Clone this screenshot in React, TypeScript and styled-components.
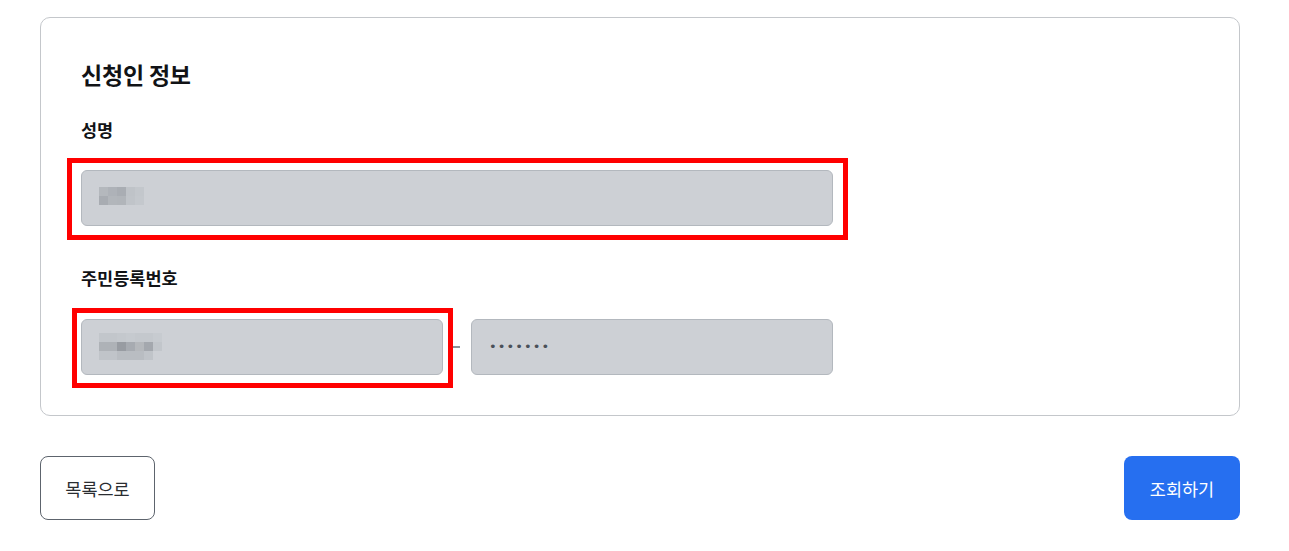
import React from "react";
import styled, { createGlobalStyle } from "styled-components";

const Global = createGlobalStyle`
  html, body { margin: 0; padding: 0; background: #ffffff; }
  body { font-family: "Noto Sans CJK KR", "Noto Sans", sans-serif; color: #1a1c1f; }
  * { box-sizing: border-box; }
`;

const Page = styled.div`
  width: 1289px;
  padding: 17px 49px 0 40px;
`;

const Card = styled.section`
  border: 1px solid #c4c7cb;
  border-radius: 10px;
  padding: 38px 40px 40px 40px;
`;

const Title = styled.h2`
  margin: 0;
  font-size: 23px;
  line-height: 36px;
  font-weight: 700;
  color: #111316;
  letter-spacing: -0.2px;
`;

const Label = styled.div<{ $top: number }>`
  margin-top: ${(p) => p.$top}px;
  font-size: 17.5px;
  line-height: 26px;
  font-weight: 700;
  color: #111316;
`;

const Row = styled.div<{ $top: number }>`
  margin-top: ${(p) => p.$top}px;
  display: flex;
  align-items: center;
`;

const Marked = styled.div<{ $t: number; $r: number; $b: number; $l: number }>`
  position: relative;
  &::after {
    content: "";
    position: absolute;
    top: -${(p) => p.$t}px;
    right: -${(p) => p.$r}px;
    bottom: -${(p) => p.$b}px;
    left: -${(p) => p.$l}px;
    border: 5px solid #ff0000;
    pointer-events: none;
  }
`;

const Field = styled.div<{ $w: number }>`
  width: ${(p) => p.$w}px;
  height: 56px;
  background: #cdd0d5;
  border: 1px solid #b3b8be;
  border-radius: 6px;
  display: flex;
  align-items: center;
  padding-left: 17px;
  font-size: 15px;
  color: #4b5058;
`;

const Dots = styled.span`
  letter-spacing: 1.1px;
  font-size: 13px;
  font-family: "DejaVu Sans", sans-serif;
  color: #4a5059;
  margin-top: -1px;
`;

const Dash = styled.span`
  width: 7px;
  height: 2px;
  background: #8c9298;
  margin: 0 11px 0 10px;
`;

const Actions = styled.div`
  margin-top: 40px;
  display: flex;
  justify-content: space-between;
`;

const Button = styled.button<{ $primary?: boolean }>`
  height: 64px;
  width: ${(p) => (p.$primary ? 116 : 115)}px;
  border-radius: 8px;
  font-family: "Noto Sans CJK KR", "Noto Sans", sans-serif;
  font-size: 17.5px;
  cursor: pointer;
  border: ${(p) => (p.$primary ? "none" : "1px solid #5d646d")};
  background: ${(p) => (p.$primary ? "#266ff0" : "#ffffff")};
  color: ${(p) => (p.$primary ? "#ffffff" : "#2a2d31")};
`;

const MosaicSvg = styled.svg`
  display: block;
  flex: none;
`;

const Mosaic: React.FC<{ grid: string[][]; dy?: number }> = ({ grid, dy = 0 }) => {
  const cell = 9;
  const w = grid[0].length * cell;
  const h = grid.length * cell;
  return (
    <MosaicSvg width={w} height={h} style={{ marginTop: dy }}>
      {grid.map((row, r) =>
        row.map((c, i) => (
          <rect key={`${r}-${i}`} x={i * cell} y={r * cell} width={cell} height={cell} fill={c} />
        ))
      )}
    </MosaicSvg>
  );
};

const nameGrid = [
  ["#b4b8bd", "#aeb2b8", "#a9adb3", "#bfc3c8", "#c3c7cc"],
  ["#a8acb2", "#b2b6bb", "#b1b5ba", "#c0c4c9", "#c4c8cd"],
];

const idGrid = [
  ["#c2c6cb", "#c2c6cb", "#c4c8cd", "#c6cacf", "#c4c8cd", "#c4c8cd", "#c7cbd0"],
  ["#aeb2b7", "#aeb2b7", "#989ca2", "#a7abb1", "#b5b8bc", "#a4a8ae", "#c2c6cb"],
  ["#c0c4c9", "#c0c4c9", "#b9bdc2", "#b9bdc2", "#b9bdc2", "#c0c4c9", "#cdd0d5"],
];

export default function App() {
  return (
    <>
      <Global />
      <Page>
        <Card>
          <Title>신청인 정보</Title>
          <Label $top={25}>성명</Label>
          <Row $top={27}>
            <Marked $t={12} $r={15} $b={14} $l={14}>
              <Field $w={752}>
                <Mosaic grid={nameGrid} dy={-4} />
              </Field>
            </Marked>
          </Row>
          <Label $top={39}>주민등록번호</Label>
          <Row $top={28}>
            <Marked $t={11} $r={10} $b={13} $l={9}>
              <Field $w={362}>
                <Mosaic grid={idGrid} dy={-1} />
              </Field>
            </Marked>
            <Dash />
            <Field $w={362}>
              <Dots>•••••••</Dots>
            </Field>
          </Row>
        </Card>
        <Actions>
          <Button>목록으로</Button>
          <Button $primary>조회하기</Button>
        </Actions>
      </Page>
    </>
  );
}
